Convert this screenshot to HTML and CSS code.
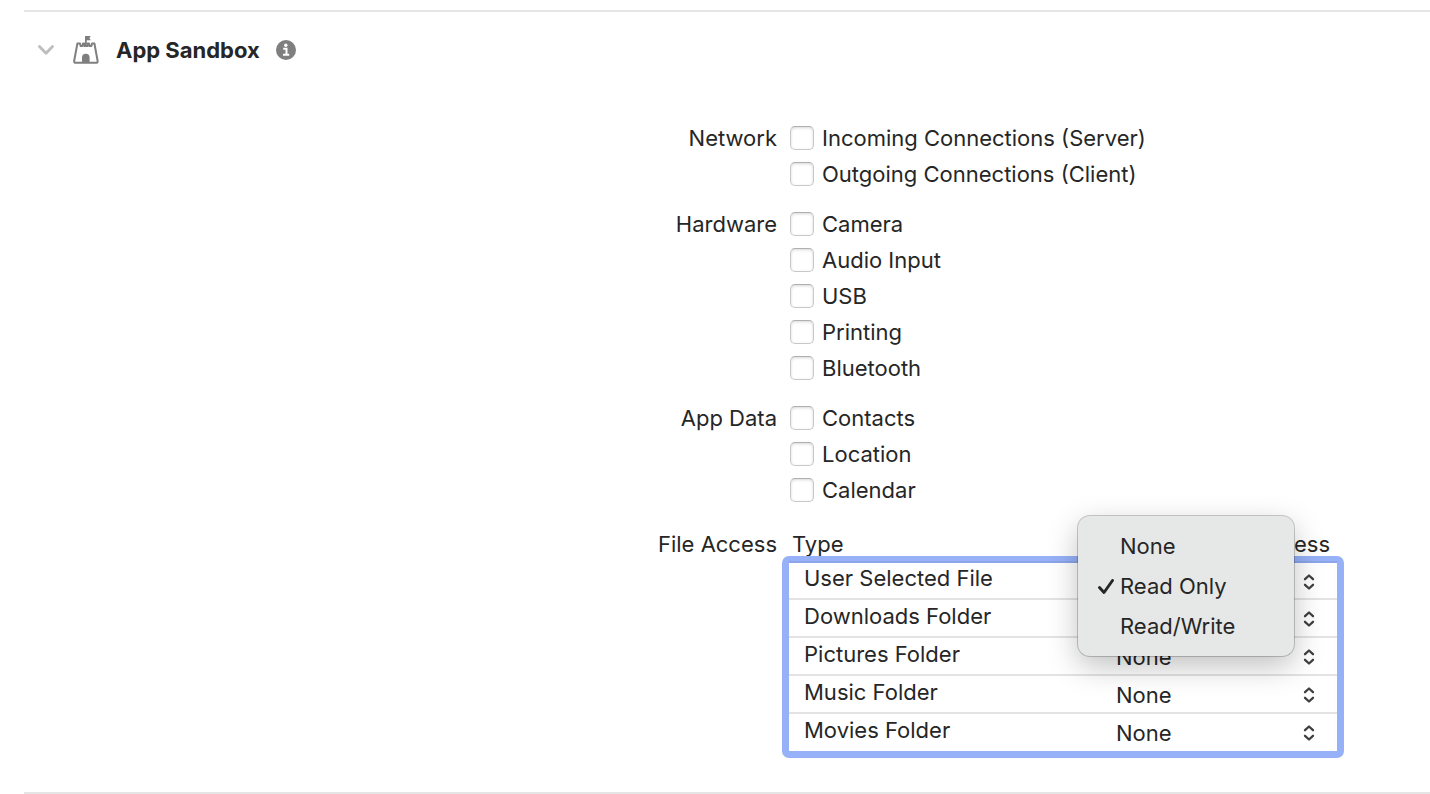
FILE: index.html
```html
<!DOCTYPE html>
<html lang="en">

<head>
    <meta charset="UTF-8">
    <title>App Sandbox</title>
    <link rel="stylesheet" href="styles.css">
</head>

<body>
    <!-- Shared up/down arrows for the access pop-ups -->
    <svg class="defs" aria-hidden="true">
        <symbol id="updown" viewBox="0 0 12 18">
            <path d="M2 6.2 L6 2.5 L10 6.2 M2 11.8 L6 15.5 L10 11.8" fill="none" stroke="#404040" stroke-width="2.3" stroke-linecap="round" stroke-linejoin="round"/>
        </symbol>
    </svg>
    <section class="capability">
        <header class="capability-header">
            <button class="icon-button disclosure" type="button" aria-label="Collapse">
                <svg width="16" height="10" viewBox="0 0 16 10">
                    <path d="M1.5 1.5 L8 8.2 L14.5 1.5" fill="none" stroke="#bdbdbd" stroke-width="2.8" stroke-linecap="round" stroke-linejoin="round"/>
                </svg>
            </button>
            <svg class="castle" width="26" height="28" viewBox="0 0 26 28" aria-hidden="true">
                <path d="M4.4 7.4 H7 L7.6 10 H9.6 L10 7.4 H11.4 L11.8 10 H14.2 L14.6 7.4 H16 L16.4 10 H18.4 L19 7.4 H21.4 L24.6 24.8 Q24.9 26.8 23 26.8 H2.8 Q0.9 26.8 1.2 24.8 Z" fill="none" stroke="#7f7f7f" stroke-width="2" stroke-linejoin="round"/>
                <path d="M12 0 H17.8 L16.4 2 L17.8 4.2 H13.8 V9 H12 Z" fill="#7f7f7f"/>
                <path d="M9 26.5 V21.5 A3.8 3.8 0 0 1 16.6 21.5 V26.5 Z" fill="#7f7f7f"/>
            </svg>
            <h2>App Sandbox</h2>
            <button class="icon-button" type="button" aria-label="Info">
                <svg width="20" height="20" viewBox="0 0 20 20">
                    <circle cx="10" cy="10" r="10" fill="#7f7f7f"/>
                    <circle cx="9.8" cy="5.2" r="1.7" fill="#fff"/>
                    <path d="M7.2 8.8 H10.5 V14.6 M7 14.8 H13.2" fill="none" stroke="#fff" stroke-width="2"/>
                </svg>
            </button>
        </header>
        <form class="settings">
            <div class="group" role="group" aria-labelledby="network">
                <div class="group-label" id="network">Network</div>
                <div class="options">
                    <label><input type="checkbox" name="incoming">Incoming Connections (Server)</label>
                    <label><input type="checkbox" name="outgoing">Outgoing Connections (Client)</label>
                </div>
            </div>
            <div class="group" role="group" aria-labelledby="hardware">
                <div class="group-label" id="hardware">Hardware</div>
                <div class="options">
                    <label><input type="checkbox" name="camera">Camera</label>
                    <label><input type="checkbox" name="audio">Audio Input</label>
                    <label><input type="checkbox" name="usb">USB</label>
                    <label><input type="checkbox" name="printing">Printing</label>
                    <label><input type="checkbox" name="bluetooth">Bluetooth</label>
                </div>
            </div>
            <div class="group" role="group" aria-labelledby="appdata">
                <div class="group-label" id="appdata">App Data</div>
                <div class="options">
                    <label><input type="checkbox" name="contacts">Contacts</label>
                    <label><input type="checkbox" name="location">Location</label>
                    <label><input type="checkbox" name="calendar">Calendar</label>
                </div>
            </div>
            <div class="group files" role="group" aria-labelledby="fileaccess">
                <div class="group-label" id="fileaccess">File Access</div>
                <div class="file-access">
                    <div class="table-head">
                        <span>Type</span>
                        <span>Access</span>
                    </div>
                    <div class="table-frame">
                        <table>
                            <tr>
                                <td><label for="user">User Selected File</label></td>
                                <td class="access"><div class="popup">
                                    <select id="user"><option>None</option><option selected>Read Only</option><option>Read/Write</option></select>
                                    <svg width="12" height="18"><use href="#updown"/></svg>
                                </div></td>
                            </tr>
                            <tr>
                                <td><label for="downloads">Downloads Folder</label></td>
                                <td class="access"><div class="popup">
                                    <select id="downloads"><option>None</option><option>Read Only</option><option>Read/Write</option></select>
                                    <svg width="12" height="18"><use href="#updown"/></svg>
                                </div></td>
                            </tr>
                            <tr>
                                <td><label for="pictures">Pictures Folder</label></td>
                                <td class="access"><div class="popup">
                                    <select id="pictures"><option>None</option><option>Read Only</option><option>Read/Write</option></select>
                                    <svg width="12" height="18"><use href="#updown"/></svg>
                                </div></td>
                            </tr>
                            <tr>
                                <td><label for="music">Music Folder</label></td>
                                <td class="access"><div class="popup">
                                    <select id="music"><option>None</option><option>Read Only</option><option>Read/Write</option></select>
                                    <svg width="12" height="18"><use href="#updown"/></svg>
                                </div></td>
                            </tr>
                            <tr>
                                <td><label for="movies">Movies Folder</label></td>
                                <td class="access"><div class="popup">
                                    <select id="movies"><option>None</option><option>Read Only</option><option>Read/Write</option></select>
                                    <svg width="12" height="18"><use href="#updown"/></svg>
                                </div></td>
                            </tr>
                        </table>
                        <!-- Open menu of the first row -->
                        <div class="menu" role="menu">
                            <button type="button" role="menuitemradio" aria-checked="false">None</button>
                            <button type="button" role="menuitemradio" aria-checked="true">
                                <svg class="tick" width="16" height="16" viewBox="0 0 16 16" aria-hidden="true">
                                    <path d="M1.5 8.5 L6 13.5 L14.5 1.5" fill="none" stroke="#262626" stroke-width="2.9" stroke-linecap="round" stroke-linejoin="round"/>
                                </svg>Read Only</button>
                            <button type="button" role="menuitemradio" aria-checked="false">Read/Write</button>
                        </div>
                    </div>
                </div>
            </div>
        </form>
    </section>
</body>

</html>
```
FILE: styles.css
```css
body {
    font-family: Inter, "Liberation Sans", sans-serif;
    font-size: 22px;
    color: #262626;
    background-color: #fff;
    margin: 0;
    padding-top: 10px;
}

button,
select {
    font: inherit;
    color: inherit;
    background: none;
    border: none;
    padding: 0;
}

.defs {
    position: absolute;
    width: 0;
    height: 0;
}

.capability {
    margin-left: 24px;
    border-top: 2px solid #e5e5e5;
    border-bottom: 2px solid #e5e5e5;
    padding: 24px 0 34px;
}

.capability-header {
    display: flex;
    align-items: center;
    height: 28px;
    padding-left: 14px;
    margin-bottom: 56px;
}

.capability-header h2 {
    font-size: 22px;
    font-weight: 700;
    margin: 0 16px 0 17px;
}

.icon-button {
    display: flex;
}

.disclosure {
    margin-right: 19px;
}

.group {
    display: grid;
    grid-template-columns: 1fr 640px;
    column-gap: 13px;
    line-height: 36px;
    margin-bottom: 14px;
}

.group-label {
    text-align: right;
}

.options label {
    display: flex;
    align-items: center;
    gap: 8px;
}

.options input {
    appearance: none;
    width: 24px;
    height: 24px;
    margin: 0;
    border: 1px solid #c8c8c8;
    border-top-color: #b0b0b0;
    border-radius: 5px;
    background-color: #fff;
    box-shadow: inset 0 1px 3px rgba(0, 0, 0, 0.16);
}

.files {
    margin: 18px 0 0;
}

.file-access {
    width: 562px;
    margin-left: -8px;
}

.table-head {
    display: flex;
    justify-content: space-between;
    height: 30px;
    padding: 0 14px 0 10px;
}

.table-frame {
    position: relative;
    border: 7px solid #96b1f8;
    border-radius: 7px;
}

table {
    width: 100%;
    border-collapse: separate;
    border-spacing: 0;
    line-height: 32px;
    box-shadow: 0 -2px #8ba5e8;
}

td {
    height: 36px;
    padding: 0 0 0 15px;
    border-bottom: 2px solid #e3e3e3;
    vertical-align: top;
}

tr:first-child td {
    height: 35px;
    line-height: 30px;
}

tr:last-child td {
    height: 37px;
    border-bottom: none;
}

.access {
    width: 221px;
    padding: 0;
}

.popup {
    display: flex;
    align-items: center;
    box-sizing: border-box;
    height: 36px;
    padding: 2px 22px 0 0;
}

tr:first-child .popup {
    height: 35px;
}

.popup select {
    flex: 1;
    appearance: none;
}

.menu {
    position: absolute;
    top: -47px;
    right: 43px;
    width: 216px;
    padding: 10px 0;
    background-color: #e6e8e7;
    border-radius: 12px;
    box-shadow: 0 0 0 1px rgba(0, 0, 0, 0.2), 0 10px 30px rgba(0, 0, 0, 0.25);
}

.menu button {
    position: relative;
    display: block;
    width: 100%;
    padding-left: 42px;
    line-height: 40px;
    text-align: left;
}

.tick {
    position: absolute;
    left: 20px;
    top: 13px;
}
```
